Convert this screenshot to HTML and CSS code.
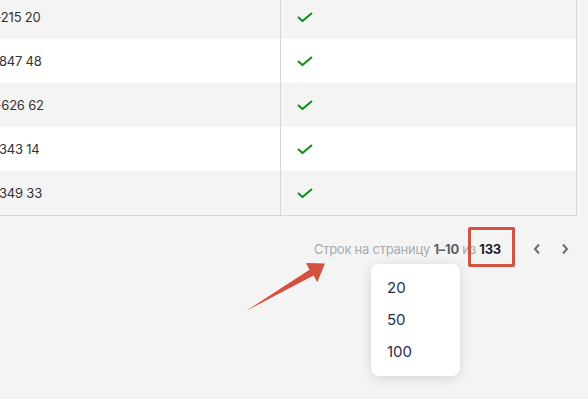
FILE: index.html
```html
<!DOCTYPE html>
<html lang="ru">
<head>
  <meta charset="UTF-8" />
  <meta name="viewport" content="width=device-width, initial-scale=1.0" />
  <title>Список номеров</title>
  <link rel="stylesheet" href="styles.css">
</head>
<body>
  <div class="tabla-wrap">
    <table class="tabla">
      <colgroup><col class="col-tel"><col></colgroup>
      <tr class="gris"><td class="tel">+7 (912) 905-215 20</td><td class="ok"><svg viewBox="0 0 16 10"><path d="M1 5 L5.5 9 L15 1"/></svg></td></tr>
      <tr><td class="tel">+7 (912) 905 847 48</td><td class="ok"><svg viewBox="0 0 16 10"><path d="M1 5 L5.5 9 L15 1"/></svg></td></tr>
      <tr class="gris"><td class="tel">+7 (912) 905-626 62</td><td class="ok"><svg viewBox="0 0 16 10"><path d="M1 5 L5.5 9 L15 1"/></svg></td></tr>
      <tr><td class="tel">+7 (912) 905 343 14</td><td class="ok"><svg viewBox="0 0 16 10"><path d="M1 5 L5.5 9 L15 1"/></svg></td></tr>
      <tr class="gris"><td class="tel">+7 (912) 905 349 33</td><td class="ok"><svg viewBox="0 0 16 10"><path d="M1 5 L5.5 9 L15 1"/></svg></td></tr>
    </table>
  </div>

  <div class="paginador">
    <span class="info">Строк на страницу <b class="rango">1–10</b> из <b class="total">133</b></span>
    <button class="flecha" type="button"><svg viewBox="0 0 8 12"><path d="M6 1.5 L2 6 L6 10.5"/></svg></button>
    <button class="flecha" type="button"><svg viewBox="0 0 8 12"><path d="M2 1.5 L6 6 L2 10.5"/></svg></button>

    <div class="marco"></div>

    <ul class="menu">
      <li>20</li>
      <li>50</li>
      <li>100</li>
    </ul>
  </div>

  <svg class="aviso" viewBox="0 0 588 399">
    <polygon points="246,311 309.5,269.8 306,263 325,263.5 317.3,282.3 313.6,275.4"/>
  </svg>
</body>
</html>
```

FILE: styles.css
```css
html, body {
  height: 100%;
}

body {
  font-family: 'Inter', 'Noto Sans', sans-serif;
  background-color: #f4f4f4;
  color: #333333;
  margin: 0;
  position: relative;
}

.tabla-wrap {
  margin: -5px 11px 0 -110px;
}

.tabla {
  width: 100%;
  table-layout: fixed;
  border-collapse: collapse;
  border-right: 1px solid #d6d6d6;
  border-bottom: 1px solid #d6d6d6;
  background-color: #ffffff;
}

.col-tel {
  width: 390px;
}

.tabla tr.gris {
  background-color: #f4f4f4;
}

.tabla td {
  height: 44px;
  padding: 0;
  font-size: 13px;
  letter-spacing: -0.2px;
  white-space: nowrap;
}

.tel {
  border-right: 1px solid #d6d6d6;
  padding-left: 30px !important;
}

.ok {
  padding-left: 16px !important;
}

.ok svg {
  display: block;
  width: 16px;
  height: 10px;
  fill: none;
  stroke: #138a18;
  stroke-width: 2;
}

.paginador {
  position: relative;
  display: flex;
  justify-content: flex-end;
  align-items: center;
  height: 26px;
  margin-top: 20px;
  padding-right: 9px;
}

.info {
  font-size: 13px;
  letter-spacing: -0.25px;
  color: #a7a9ae;
  margin-right: 22px;
}

.info b {
  font-weight: 700;
}

.rango {
  color: #5f6067;
}

.total {
  color: #1d1f2c;
}

.flecha {
  width: 28px;
  height: 26px;
  padding: 0;
  border: none;
  background: none;
  display: flex;
  align-items: center;
  justify-content: center;
}

.flecha svg {
  width: 8px;
  height: 12px;
  fill: none;
  stroke: #6c6e75;
  stroke-width: 2;
}

.marco {
  position: absolute;
  left: 468px;
  top: -9px;
  width: 41px;
  height: 34px;
  border: 3px solid #d4503f;
  border-radius: 2px;
}

.menu {
  position: absolute;
  left: 371px;
  top: 28px;
  width: 89px;
  margin: 0;
  padding: 8px 0;
  list-style: none;
  background-color: #ffffff;
  border-radius: 8px;
  box-shadow: 0 2px 12px rgba(0, 0, 0, 0.13);
}

.menu li {
  height: 32px;
  line-height: 32px;
  padding-left: 16px;
  font-size: 15px;
  color: #2b2d45;
}

.aviso {
  position: absolute;
  left: 0;
  top: 0;
  width: 588px;
  height: 399px;
  fill: #d4503f;
  pointer-events: none;
}
```
